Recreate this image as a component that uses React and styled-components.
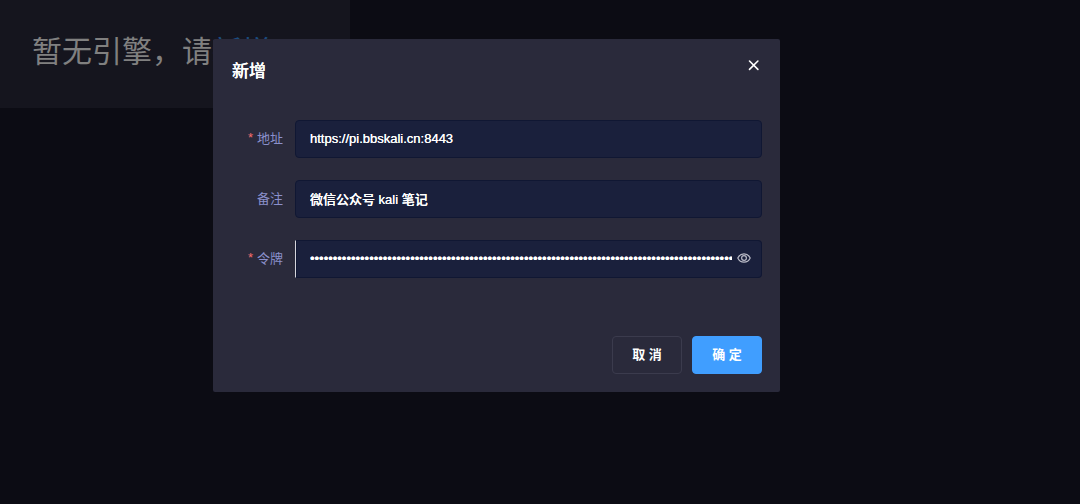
import React, { useState } from "react";
import styled, { createGlobalStyle } from "styled-components";

const GlobalStyle = createGlobalStyle`
  *, *::before, *::after { box-sizing: border-box; }
  body {
    margin: 0;
    background: #0c0c14;
    color: #ffffff;
    font-family: "Liberation Sans", "Noto Sans CJK SC", sans-serif;
    font-size: 13px;
  }
  button, input { font: inherit; }
`;

const Page = styled.main`
  min-height: 100vh;
  overflow: hidden;
`;

const EmptyCard = styled.section`
  width: fit-content;
  min-width: 350px;
  padding: 28px 32px 38px;
  background: #15151e;
`;

const EmptyText = styled.p`
  margin: 0;
  font-family: "Noto Sans CJK SC", sans-serif;
  font-size: 30px;
  line-height: 42px;
  color: #808080;
`;

const AddLink = styled.a`
  color: #1b4c80;
  text-decoration: none;
`;

const Overlay = styled.div`
  position: fixed;
  inset: 0;
  display: flex;
  align-items: flex-start;
  justify-content: center;
  padding: 39px 87px 0 0;
`;

const Dialog = styled.section`
  width: 100%;
  max-width: 567px;
  padding: 18px 18px 18px 19px;
  border-radius: 2px;
  background: #2a2a3b;
`;

const DialogHeader = styled.header`
  display: flex;
  align-items: flex-start;
  justify-content: space-between;
  margin-bottom: 37px;
`;

const Title = styled.h2`
  margin: 0;
  font-family: "Noto Sans CJK SC", sans-serif;
  font-size: 17px;
  font-weight: 500;
  line-height: 26px;
  text-shadow: 0 0 0 currentColor;
`;

const IconButton = styled.button`
  display: flex;
  padding: 0;
  border: 0;
  background: none;
  color: ${({ $color }) => $color};
  cursor: pointer;
`;

const Form = styled.form`
  display: flex;
  flex-direction: column;
`;

const Fields = styled.div`
  display: grid;
  gap: 22px;
  margin-bottom: 58px;
`;

const Field = styled.div`
  display: grid;
  grid-template-columns: 51px minmax(0, 1fr);
  column-gap: 12px;
  align-items: center;
`;

const Label = styled.label`
  display: flex;
  justify-content: flex-end;
  gap: 4px;
  padding-bottom: 2px;
  font-family: "Noto Sans CJK SC", sans-serif;
  line-height: 20px;
  color: #8b90cb;
`;

const Required = styled.span`
  font-family: "Liberation Sans", sans-serif;
  color: #f56c6c;
`;

const InputBox = styled.div`
  display: flex;
  align-items: center;
  height: 38px;
  padding: 0 10px 0 14px;
  border: 1px solid #101733;
  border-radius: ${({ $marked }) => ($marked ? "0 4px 4px 0" : "4px")};
  background: #1a203c;
  box-shadow: ${({ $marked }) => ($marked ? "inset 1px 0 0 #101733" : "none")};
  border-left-color: ${({ $marked }) => ($marked ? "#d5d5dc" : "#101733")};
`;

const TextInput = styled.input`
  flex: 1;
  min-width: 0;
  height: 36px;
  padding: 0 0 2px;
  border: 0;
  outline: 0;
  background: none;
  color: #ffffff;
  font-weight: 500;
  text-shadow: 0 0 0 currentColor;
`;

const Suffix = styled.span`
  display: flex;
  margin-left: 5px;
  padding-bottom: 2px;
`;

const Actions = styled.footer`
  display: flex;
  justify-content: flex-end;
  gap: 10px;
`;

const ActionButton = styled.button`
  width: 70px;
  height: 38px;
  padding: 0 0 3px;
  border: 1px solid ${({ $primary }) => ($primary ? "#409eff" : "#3b3b4d")};
  border-radius: 4px;
  background: ${({ $primary }) => ($primary ? "#409eff" : "transparent")};
  color: #ffffff;
  font-weight: 700;
  cursor: pointer;
`;

function CloseIcon() {
  return (
    <svg width="16" height="16" viewBox="0 0 16 16" fill="none" stroke="currentColor" strokeWidth="1.6" strokeLinecap="round" aria-hidden="true">
      <path d="M3.5 4l8.4 8.4M11.9 4l-8.4 8.4" />
    </svg>
  );
}

function EyeIcon() {
  return (
    <svg width="14" height="12" viewBox="0 0 14 12" fill="none" stroke="currentColor" strokeWidth="1.2" aria-hidden="true">
      <path d="M0.8 6C2.1 3.2 4.3 1.8 7 1.8S11.9 3.2 13.2 6C11.9 8.8 9.7 10.2 7 10.2S2.1 8.8 0.8 6Z" />
      <circle cx="7" cy="6" r="2.4" />
    </svg>
  );
}

function FormField({ id, label, required, marked, type = "text", value, onChange, suffix }) {
  return (
    <Field>
      <Label htmlFor={id}>
        {required && <Required>*</Required>}
        {label}
      </Label>
      <InputBox $marked={marked}>
        <TextInput id={id} type={type} required={required} value={value} onChange={onChange} autoComplete="off" />
        {suffix && <Suffix>{suffix}</Suffix>}
      </InputBox>
    </Field>
  );
}

export default function App() {
  const [address, setAddress] = useState("https://pi.bbskali.cn:8443");
  const [note, setNote] = useState("微信公众号 kali 笔记");
  const [token, setToken] = useState("0".repeat(120));
  const [visible, setVisible] = useState(false);

  return (
    <>
      <GlobalStyle />
      <Page>
        <EmptyCard>
          <EmptyText>
            暂无引擎，请<AddLink href="#add">新增</AddLink>
          </EmptyText>
        </EmptyCard>
        <Overlay>
          <Dialog role="dialog" aria-modal="true" aria-labelledby="dialog-title">
            <DialogHeader>
              <Title id="dialog-title">新增</Title>
              <IconButton type="button" $color="#ffffff" aria-label="关闭">
                <CloseIcon />
              </IconButton>
            </DialogHeader>
            <Form onSubmit={(event) => event.preventDefault()}>
              <Fields>
                <FormField id="address" label="地址" required value={address} onChange={(e) => setAddress(e.target.value)} />
                <FormField id="note" label="备注" value={note} onChange={(e) => setNote(e.target.value)} />
                <FormField
                  id="token"
                  label="令牌"
                  required
                  marked
                  type={visible ? "text" : "password"}
                  value={token}
                  onChange={(e) => setToken(e.target.value)}
                  suffix={
                    <IconButton type="button" $color="#b9bac6" aria-label="显示令牌" onClick={() => setVisible(!visible)}>
                      <EyeIcon />
                    </IconButton>
                  }
                />
              </Fields>
              <Actions>
                <ActionButton type="button">取 消</ActionButton>
                <ActionButton type="submit" $primary>确 定</ActionButton>
              </Actions>
            </Form>
          </Dialog>
        </Overlay>
      </Page>
    </>
  );
}
